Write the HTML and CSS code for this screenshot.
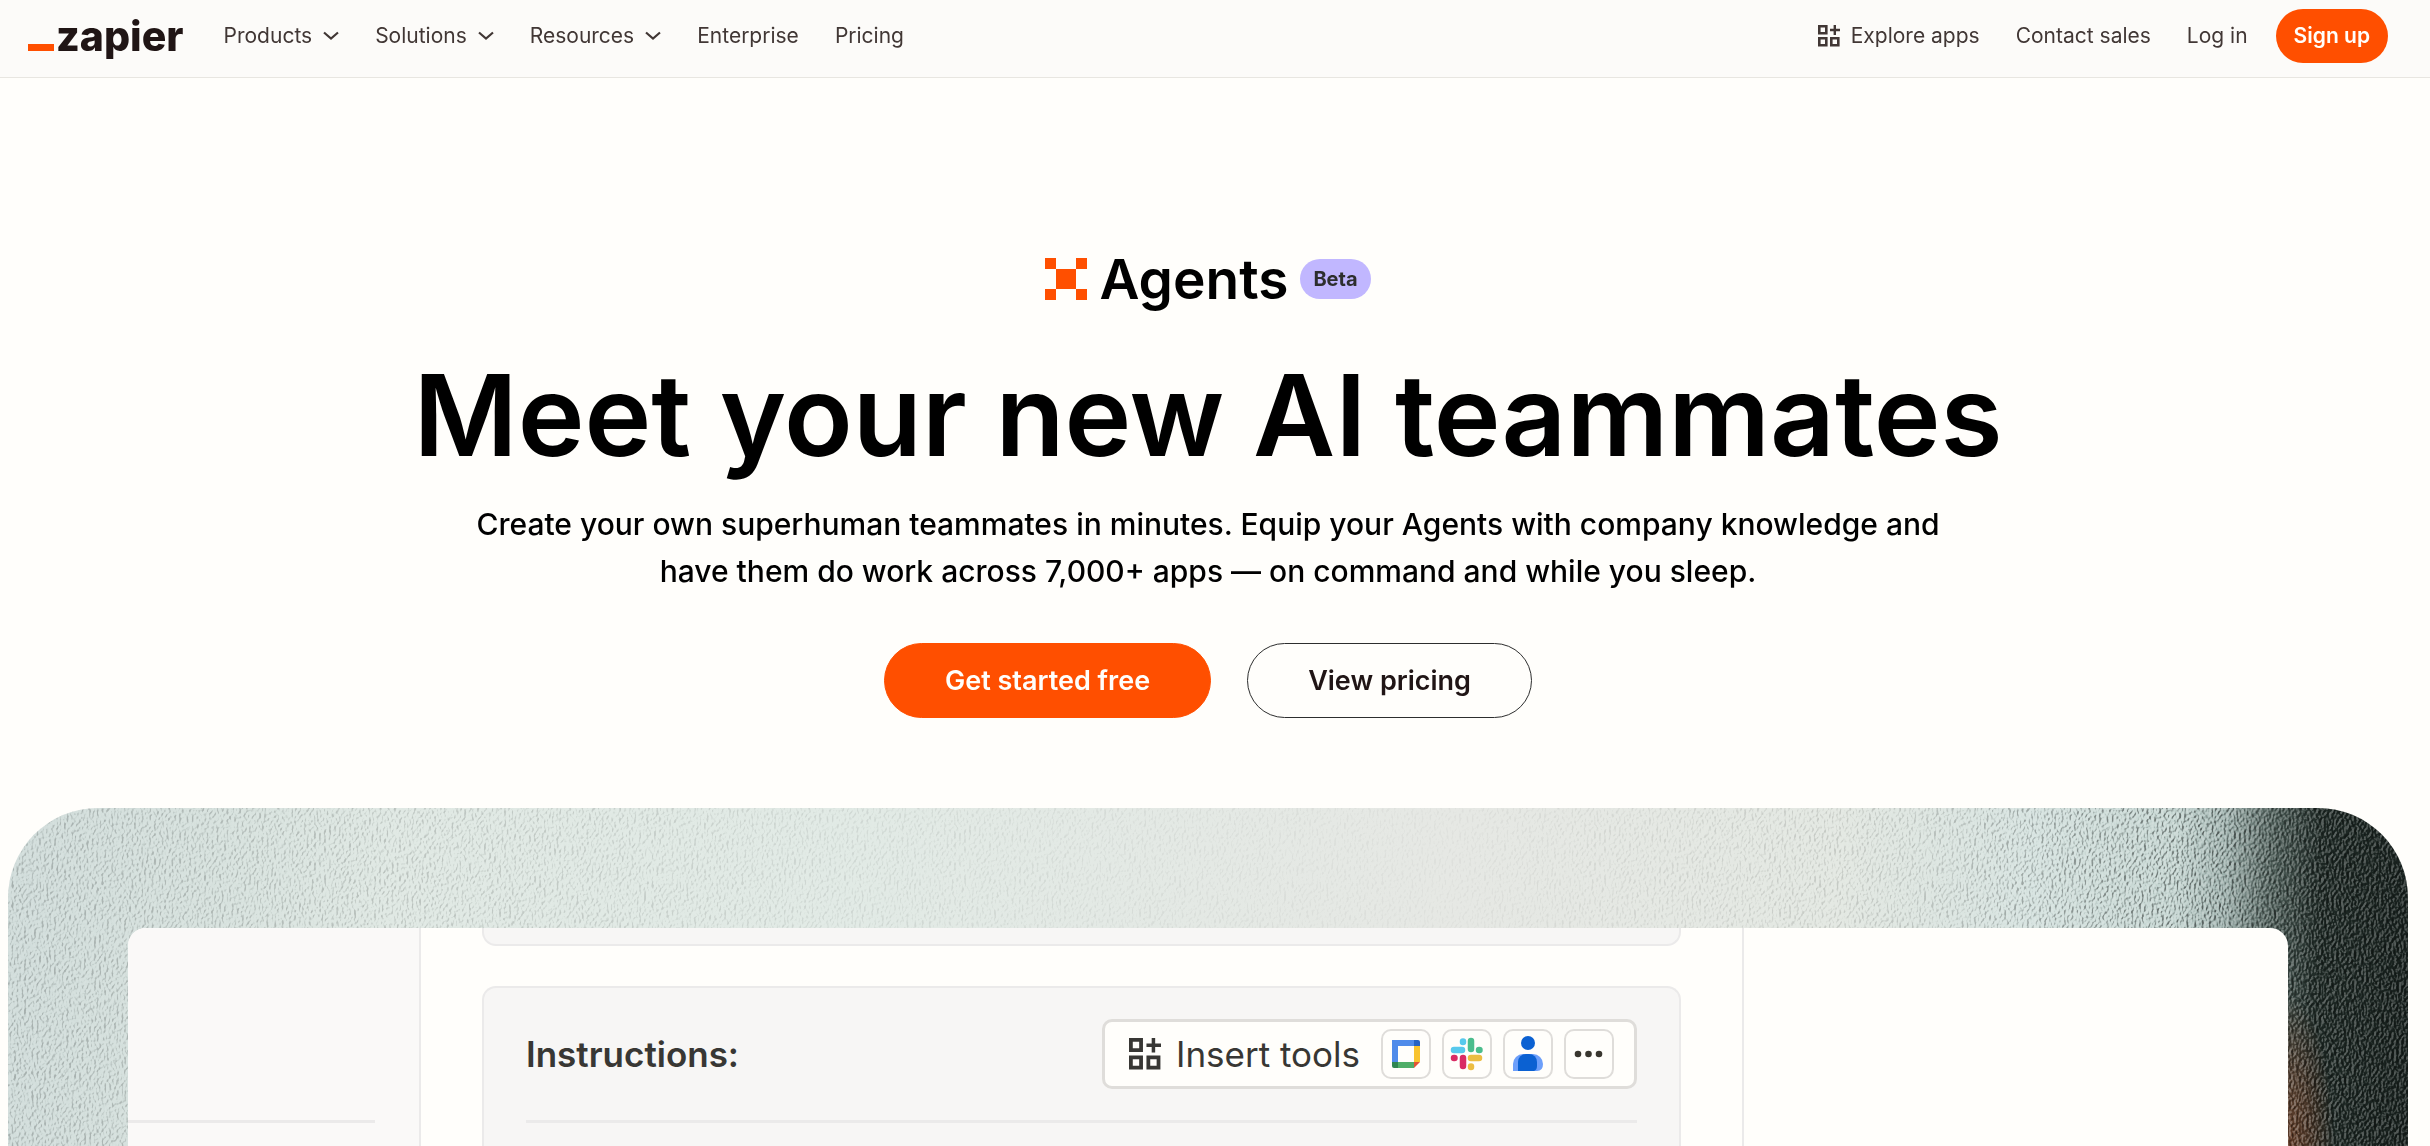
FILE: index.html
```html
<!DOCTYPE html>
<html lang="en">

<head>
  <meta charset="UTF-8" />
  <meta name="viewport" content="width=device-width, initial-scale=1.0" />
  <title>Zapier Agents</title>
  <link rel="stylesheet" href="styles.css">
</head>

<body>
  <svg class="defs" width="0" height="0" aria-hidden="true">
    <symbol id="chevron" viewBox="0 0 16 10">
      <path d="M1 1.500 8 7.500 15 1.500" fill="none" stroke="currentColor" stroke-width="2.200" />
    </symbol>
    <symbol id="apps" viewBox="0 0 22 22">
      <path d="M1.300 1.300h7v7h-7zM1.300 13.300h7v7h-7zM13.300 13.300h7v7h-7z" fill="none" stroke="currentColor" stroke-width="2.600" />
      <path d="M16.800 0v10M12 5h10" fill="none" stroke="currentColor" stroke-width="2.400" />
    </symbol>
  </svg>

  <header class="header">
    <a class="logo" href="#" aria-label="Zapier home">
      <span class="logo-bar"></span>zapier
    </a>
    <nav class="nav">
      <button class="nav-item">Products <svg class="chevron"><use href="#chevron" /></svg></button>
      <button class="nav-item">Solutions <svg class="chevron"><use href="#chevron" /></svg></button>
      <button class="nav-item">Resources <svg class="chevron"><use href="#chevron" /></svg></button>
      <a class="nav-item" href="#">Enterprise</a>
      <a class="nav-item" href="#">Pricing</a>
    </nav>
    <nav class="nav nav-right">
      <a class="nav-item" href="#"><svg class="apps-icon"><use href="#apps" /></svg>Explore apps</a>
      <a class="nav-item" href="#">Contact sales</a>
      <a class="nav-item" href="#">Log in</a>
    </nav>
    <a class="signup" href="#">Sign up</a>
  </header>

  <main class="main">
    <section class="hero">
      <div class="product">
        <svg class="product-icon" viewBox="0 0 42 42">
          <path d="M0 0h11v11H0zM31 0h11v11H31zM0 31h11v11H0zM31 31h11v11H31zM11 11h20v20H11z" fill="#ff4f00" />
        </svg>
        <span class="product-name">Agents</span>
        <span class="badge">Beta</span>
      </div>
      <h1>Meet your new AI teammates</h1>
      <p class="lead">Create your own superhuman teammates in minutes. Equip your Agents with company knowledge and have them do work across 7,000+ apps — on command and while you sleep.</p>
      <div class="actions">
        <a class="btn btn-primary" href="#">Get started free</a>
        <a class="btn btn-outline" href="#">View pricing</a>
      </div>
    </section>

    <section class="showcase">
      <svg class="grain" aria-hidden="true">
        <filter id="leather" x="0" y="0" width="100%" height="100%" color-interpolation-filters="sRGB">
          <feTurbulence type="fractalNoise" baseFrequency="0.4 0.3" numOctaves="2" seed="4" result="noise" />
          <feColorMatrix in="noise" values="0 0 0 0 0  0 0 0 0 0  0 0 0 0 0  1 0 0 0 0" />
          <feDiffuseLighting surfaceScale="3" lighting-color="#ffffff" diffuseConstant="0.82">
            <feDistantLight azimuth="200" elevation="45" />
          </feDiffuseLighting>
        </filter>
        <rect width="100%" height="100%" filter="url(#leather)" />
      </svg>
      <div class="window">
        <aside class="sidebar">
          <hr class="rule" />
        </aside>
        <div class="editor">
          <div class="card card-cut"></div>
          <div class="card card-instructions">
            <div class="card-head">
              <h2>Instructions:</h2>
              <div class="tools">
                <svg class="tools-icon"><use href="#apps" /></svg>
                <span class="tools-label">Insert tools</span>
                <button class="tool" aria-label="Google Calendar">
                  <svg viewBox="0 0 46 46">
                    <path d="M9 9h22v6H15v16H9z" fill="#4f8bea" />
                    <path d="M31 9h4a2 2 0 0 1 2 2v4h-6z" fill="#2563c4" />
                    <path d="M31 15h6v16h-6z" fill="#f8c32f" />
                    <path d="M15 31h16v6H15z" fill="#4fae68" />
                    <path d="M9 31h6v6h-4a2 2 0 0 1-2-2z" fill="#2f8652" />
                    <path d="M31 31h6l-6 6z" fill="#e25435" />
                  </svg>
                </button>
                <button class="tool" aria-label="Slack">
                  <svg viewBox="0 0 46 46" fill="none" stroke-width="6.500" stroke-linecap="round">
                    <path d="M10 19h8M19 10.500v.5" stroke="#57c9ed" />
                    <path d="M27 10v8M35 19h.5" stroke="#4bbd8d" />
                    <path d="M27 27h8M27 35.500v.5" stroke="#ecbd42" />
                    <path d="M19 27v8M10 27h.5" stroke="#d92b65" />
                  </svg>
                </button>
                <button class="tool" aria-label="Contacts">
                  <svg viewBox="0 0 46 46">
                    <path d="M8 40v-7a10 10 0 0 1 10-10h10a10 10 0 0 1 10 10q0 7-6 7z" fill="#6d9ffa" />
                    <path d="M13 40v-9a8 8 0 0 1 8-8h3a8 8 0 0 1 8 8v4q0 4-3 5z" fill="#0b61d2" />
                    <circle cx="23" cy="12" r="7" fill="#0b61d2" />
                  </svg>
                </button>
                <button class="tool" aria-label="More tools">
                  <svg viewBox="0 0 46 46" fill="#38362f">
                    <circle cx="12" cy="23" r="3.300" />
                    <circle cx="22.500" cy="23" r="3.300" />
                    <circle cx="33" cy="23" r="3.300" />
                  </svg>
                </button>
              </div>
            </div>
            <hr class="rule" />
          </div>
        </div>
      </div>
    </section>
  </main>
</body>

</html>
```

FILE: styles.css
```css
:root {
  --orange: #ff4f00;
  --ink: #201515;
  --text: #413735;
  --cream: #fffefb;
  --line: #ebeaea;
  --lilac: #c1b7ff;
}

* {
  box-sizing: border-box;
}

body {
  margin: 0;
  min-height: 100vh;
  display: flex;
  flex-direction: column;
  background: var(--cream);
  color: #000;
  font-family: Inter, "Liberation Sans", sans-serif;
}

a {
  color: inherit;
  text-decoration: none;
}

button {
  border: none;
  background: none;
  padding: 0;
  color: inherit;
  font: inherit;
  cursor: pointer;
}

.defs {
  position: absolute;
}

/* header */
.header {
  display: flex;
  align-items: center;
  height: 78px;
  padding: 0 42px 6px 28px;
  background: #fcfbf9;
  border-bottom: 1px solid #e8e6e1;
}

.logo {
  display: flex;
  align-items: baseline;
  gap: 2px;
  margin-right: 40px;
  color: var(--ink);
  font-size: 41px;
  line-height: 50px;
  font-weight: 800;
}

.logo-bar {
  width: 26px;
  height: 7px;
  background: var(--orange);
}

.nav {
  display: flex;
  align-items: center;
  gap: 36px;
  color: var(--text);
  font-size: 21px;
  line-height: 28px;
}

.nav-right {
  margin-left: auto;
}

.nav-item {
  display: flex;
  align-items: center;
  gap: 11px;
}

.chevron {
  width: 16px;
  height: 10px;
}

.apps-icon {
  width: 22px;
  height: 22px;
}

.signup {
  margin-left: 28px;
  padding: 13px 18px;
  border-radius: 27px;
  background: var(--orange);
  color: var(--cream);
  font-size: 21px;
  line-height: 28px;
  font-weight: 600;
}

/* hero */
.main {
  flex: 1;
  display: flex;
  flex-direction: column;
  padding: 0 22px 0 8px;
}

.hero {
  display: flex;
  flex-direction: column;
  align-items: center;
  padding: 167px 24px 90px;
  text-align: center;
}

.product {
  display: flex;
  align-items: center;
  gap: 12px;
}

.product-icon {
  width: 42px;
  height: 42px;
}

.product-name {
  font-size: 55px;
  line-height: 68px;
  font-weight: 600;
}

.badge {
  padding: 6px 13px;
  border-radius: 20px;
  background: var(--lilac);
  color: #2d2e2e;
  font-size: 20px;
  line-height: 28px;
  font-weight: 700;
}

h1 {
  margin: 36px 0 20px;
  font-size: 113px;
  line-height: 132px;
  font-weight: 600;
}

.lead {
  max-width: 1500px;
  margin: 0 0 48px;
  font-size: 30px;
  line-height: 47px;
  font-weight: 500;
}

.actions {
  display: flex;
  gap: 36px;
}

.btn {
  padding: 18px 60px;
  border: 1px solid transparent;
  border-radius: 38px;
  font-size: 27px;
  line-height: 37px;
  font-weight: 600;
}

.btn-primary {
  background: var(--orange);
  border-color: var(--orange);
  color: var(--cream);
}

.btn-outline {
  border-color: #2d2e2e;
  color: var(--ink);
}

/* showcase */
.showcase {
  position: relative;
  flex: 1;
  display: flex;
  padding: 120px 120px 0;
  border-radius: 90px 90px 0 0;
  overflow: hidden;
  background:
    radial-gradient(ellipse 46px 150px at 95% 100%, rgba(110, 62, 38, 0.850) 0%, rgba(110, 62, 38, 0.500) 50%, transparent 100%),
    linear-gradient(92deg, #d0dcda 0%, #d6e1dd 9%, #dfe8e3 16%, #e1eae5 35%, #e6e8e4 60%, #e3e8e2 76%, #d5e2df 84%, #c2d3cf 90%, #9db0ac 92%, #4f5f5a 94%, #1f2a26 96%, #18211e 100%);
}

.grain {
  position: absolute;
  inset: 0;
  width: 100%;
  height: 100%;
  mix-blend-mode: hard-light;
  mask-image: linear-gradient(90deg, rgba(0, 0, 0, 0.200) 0%, rgba(0, 0, 0, 0.160) 15%, rgba(0, 0, 0, 0.080) 35%, rgba(0, 0, 0, 0.030) 60%, rgba(0, 0, 0, 0.150) 80%, rgba(0, 0, 0, 0.500) 92%, rgba(0, 0, 0, 0.400) 100%);
}

.window {
  position: relative;
  flex: 1;
  display: grid;
  grid-template-columns: 293fr 1323fr 544fr;
  border-radius: 18px 18px 0 0;
  overflow: hidden;
  background: var(--cream);
}

.sidebar {
  padding: 192px 44px 0 0;
  background: #faf9f8;
  border-right: 2px solid var(--line);
}

.rule {
  width: 100%;
  height: 3px;
  margin: 0;
  border: none;
  background: var(--line);
}

.editor {
  display: flex;
  flex-direction: column;
  gap: 40px;
  padding: 0 61px;
  border-right: 2px solid var(--line);
}

.card {
  border: 2px solid var(--line);
  border-radius: 14px;
  background: #f7f6f5;
}

.card-cut {
  height: 18px;
  border-top: none;
  border-radius: 0 0 14px 14px;
}

.card-instructions {
  flex: 1;
  padding: 31px 42px 0;
  border-bottom: none;
  border-radius: 14px 14px 0 0;
}

.card-head {
  display: flex;
  align-items: center;
  justify-content: space-between;
  margin-bottom: 31px;
}

h2 {
  margin: 0;
  color: #383734;
  font-size: 35px;
  line-height: 44px;
  font-weight: 600;
}

.tools {
  display: flex;
  align-items: center;
  gap: 11px;
  padding: 7px 20px 7px 24px;
  border: 3px solid #dfddda;
  border-radius: 10px;
  background: var(--cream);
  color: #383734;
}

.tools-icon {
  width: 32px;
  height: 32px;
}

.tools-label {
  margin: 0 10px 0 4px;
  font-size: 35px;
  line-height: 44px;
}

.tool {
  width: 50px;
  height: 50px;
  border: 2px solid #dfddda;
  border-radius: 10px;
}

.tool svg {
  display: block;
}
```
